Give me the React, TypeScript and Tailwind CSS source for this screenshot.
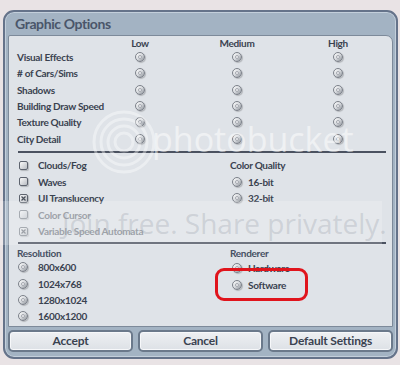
import React from "react";

const font = { fontFamily: "Lato, 'Open Sans', sans-serif" } as const;

function Radio() {
  return (
    <span className="inline-flex items-center justify-center w-[10px] h-[10px] rounded-full border border-[#7c818a] bg-gradient-to-br from-[#ffffff] via-[#d6d9dd] to-[#8d9299] shadow-[1px_1px_1px_rgba(0,0,0,0.2)]">
      <span className="w-[4px] h-[4px] rounded-full bg-[#f2f3f5] border border-[#a4a8af]" />
    </span>
  );
}

function Check({ checked = false, dim = false }: { checked?: boolean; dim?: boolean }) {
  return (
    <span
      className={
        "inline-flex items-center justify-center w-[9px] h-[9px] rounded-[2px] border border-[#5d636e] bg-gradient-to-br from-[#fafafa] to-[#b9bdc3] shadow-[1px_1px_1px_rgba(0,0,0,0.2)] " +
        (dim ? "opacity-60" : "")
      }
    >
      {checked && (
        <svg width="7" height="7" viewBox="0 0 7 7">
          <path d="M1.5 1.5 L5.5 5.5 M5.5 1.5 L1.5 5.5" stroke="#4a505a" strokeWidth="1.2" />
        </svg>
      )}
    </span>
  );
}

const rows = [
  "Visual Effects",
  "# of Cars/Sims",
  "Shadows",
  "Building Draw Speed",
  "Texture Quality",
  "City Detail",
];

export default function App() {
  return (
    <div
      className="relative w-[400px] h-[365px] bg-[#e9e3e5] overflow-hidden pt-[10px] pl-[3px]"
      style={font}
    >
      <div className="w-[395px] h-[349px] rounded-[11px] border-2 border-[#65738a] bg-[#a3b3c3] shadow-[inset_0_0_0_1px_#c3cfdb] flex flex-col px-[3px]">
        <div className="h-[23px] flex items-center pl-[7px] text-[14px] font-bold text-[#4a566a] tracking-[-0.4px]">
          Graphic Options
        </div>
        <div className="h-[292px] bg-[#dfe3e8] border border-[#7d8a9a] rounded-tr-[7px] rounded-tl-[2px] text-[#3a4250] text-[10px] font-bold leading-none pl-[8px] pr-[6px] tracking-[-0.3px]">
          {/* quality table */}
          <div className="flex h-[13px] items-end pb-[1px]">
            <div className="w-[103px]" />
            <div className="w-[40px] text-center">Low</div>
            <div className="w-[40px] ml-[57px] text-center">Medium</div>
            <div className="w-[40px] ml-[61px] text-center">High</div>
          </div>
          {rows.map((r) => (
            <div key={r} className="flex h-[16.3px] items-center">
              <div className="w-[103px]">{r}</div>
              <div className="w-[40px] flex justify-center">
                <Radio />
              </div>
              <div className="w-[40px] ml-[57px] flex justify-center">
                <Radio />
              </div>
              <div className="w-[40px] ml-[61px] flex justify-center">
                <Radio />
              </div>
            </div>
          ))}
          <div className="mt-[4px] ml-[1px] h-[2px] bg-[#4b5260]" />

          {/* options */}
          <div className="flex mt-[4px]">
            <div className="w-[213px] pl-[2px]">
              {[
                { t: "Clouds/Fog", c: false, d: false },
                { t: "Waves", c: false, d: false },
                { t: "UI Translucency", c: true, d: false },
                { t: "Color Cursor", c: false, d: true },
                { t: "Variable Speed Automata", c: true, d: true },
              ].map((o) => (
                <div key={o.t} className="flex h-[16.5px] items-center">
                  <Check checked={o.c} dim={o.d} />
                  <span className={"ml-[10px] " + (o.d ? "text-[#868b94]" : "")}>{o.t}</span>
                </div>
              ))}
            </div>
            <div>
              <div className="h-[16.5px] flex items-center">Color Quality</div>
              {["16-bit", "32-bit"].map((t) => (
                <div key={t} className="flex h-[16.5px] items-center pl-[2px]">
                  <Radio />
                  <span className="ml-[6px]">{t}</span>
                </div>
              ))}
            </div>
          </div>
          <div className="mt-[3px] ml-[1px] h-[2px] bg-[#4b5260]" />

          <div className="flex mt-[2px]">
            <div className="w-[213px]">
              <div className="h-[13px] flex items-center text-[#465063]">Resolution</div>
              {["800x600", "1024x768", "1280x1024", "1600x1200"].map((t) => (
                <div key={t} className="flex h-[16.3px] items-center pl-[1px]">
                  <Radio />
                  <span className="ml-[10px]">{t}</span>
                </div>
              ))}
            </div>
            <div>
              <div className="h-[13px] flex items-center text-[#465063]">Renderer</div>
              <div className="h-[1px]" />
              {["Hardware", "Software"].map((t) => (
                <div key={t} className="flex h-[16.3px] items-center pl-[2px]">
                  <Radio />
                  <span className="ml-[6px]">{t}</span>
                </div>
              ))}
            </div>
          </div>
        </div>
        <div className="flex gap-[5px] mt-[3px] h-[22px] text-[12px] font-bold text-[#3a4250] tracking-[-0.2px]">
          {["Accept", "Cancel", "Default Settings"].map((t) => (
            <button
              key={t}
              className="flex-1 flex items-center justify-center rounded-[5px] border-2 border-[#6b798b] bg-gradient-to-b from-[#eef0f3] to-[#dde1e6] shadow-[inset_0_0_0_1px_#f7f8fa]"
            >
              {t}
            </button>
          ))}
        </div>
      </div>

      {/* photobucket watermark */}
      <div className="absolute left-[0px] top-[201px] w-[382px] h-[44px] bg-[rgba(255,255,255,0.2)] pointer-events-none" />
      <div className="absolute left-[92px] top-[110px] pointer-events-none opacity-40">
        <svg width="64" height="64" viewBox="0 0 64 64">
          <circle cx="32" cy="32" r="30" fill="none" stroke="#ffffff" strokeWidth="3" />
          <circle cx="32" cy="32" r="23" fill="none" stroke="#ffffff" strokeWidth="3" />
          <circle cx="32" cy="32" r="16" fill="none" stroke="#ffffff" strokeWidth="3" />
          <circle cx="32" cy="32" r="9" fill="none" stroke="#ffffff" strokeWidth="3" />
        </svg>
      </div>
      <div
        className="absolute left-[152px] top-[122px] text-[34px] leading-none text-[rgba(255,255,255,0.5)] pointer-events-none"
        style={{ fontFamily: "'Open Sans', sans-serif" }}
      >
        photobucket
      </div>
      <div
        className="absolute left-[62px] top-[209px] text-[28px] leading-none text-[rgba(150,155,165,0.3)] pointer-events-none"
        style={{ fontFamily: "'Open Sans', sans-serif" }}
      >
        Join free. Share privately.
      </div>

      {/* red highlight */}
      <div className="absolute left-[215px] top-[268px] w-[93px] h-[33px] rounded-[9px] border-[3px] border-[#e0141c] pointer-events-none" />
    </div>
  );
}
